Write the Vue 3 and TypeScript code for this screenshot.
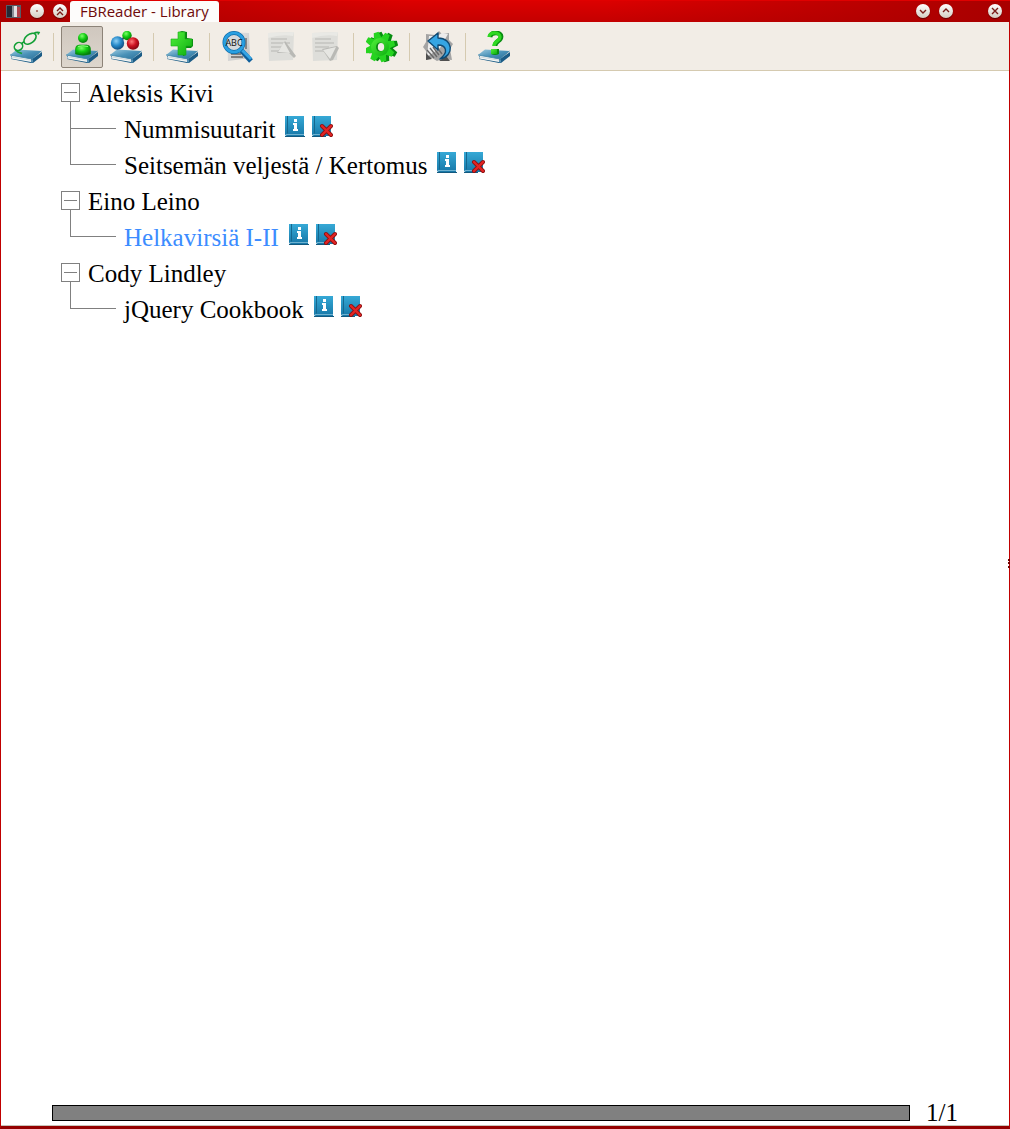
<script setup lang="ts">
import { ref } from 'vue'

interface Book {
  title: string
  current?: boolean
}
interface Author {
  name: string
  open: boolean
  books: Book[]
}
interface Tool {
  id: string
  label: string
  onBook?: boolean
  disabled?: boolean
}

const toolGroups: Tool[][] = [
  [{ id: 'glasses', label: 'Read book', onBook: true }],
  [
    { id: 'person', label: 'Sort by author', onBook: true },
    { id: 'tags', label: 'Sort by tag', onBook: true },
  ],
  [{ id: 'plus', label: 'Add book', onBook: true }],
  [
    { id: 'search', label: 'Search' },
    { id: 'previous', label: 'Find previous', disabled: true },
    { id: 'next', label: 'Find next', disabled: true },
  ],
  [{ id: 'gear', label: 'Preferences' }],
  [{ id: 'rotate', label: 'Rotate text' }],
  [{ id: 'help', label: 'About', onBook: true }],
]

const gearTeeth = [0, 45, 90, 135, 180, 225, 270, 315].map((angle) => angle - 15)

const active = ref('person')

const authors = ref<Author[]>([
  { name: 'Aleksis Kivi', open: true, books: [{ title: 'Nummisuutarit' }, { title: 'Seitsemän veljestä / Kertomus' }] },
  { name: 'Eino Leino', open: true, books: [{ title: 'Helkavirsiä I-II', current: true }] },
  { name: 'Cody Lindley', open: true, books: [{ title: 'jQuery Cookbook' }] },
])
</script>

<template>
  <div class="window">
    <svg class="defs" width="0" height="0" aria-hidden="true">
      <defs>
        <linearGradient id="cover" x1="0" y1="0" x2="1" y2="1">
          <stop offset="0" stop-color="#9ccbe0" />
          <stop offset=".5" stop-color="#4a92b8" />
          <stop offset="1" stop-color="#2a6f99" />
        </linearGradient>
        <radialGradient id="green" cx=".4" cy=".3" r=".7">
          <stop offset="0" stop-color="#7dff6a" />
          <stop offset=".5" stop-color="#12cc12" />
          <stop offset="1" stop-color="#067a0c" />
        </radialGradient>
        <radialGradient id="blue" cx=".4" cy=".35" r=".7">
          <stop offset="0" stop-color="#8fd0f5" />
          <stop offset=".5" stop-color="#2689c9" />
          <stop offset="1" stop-color="#0d4676" />
        </radialGradient>
        <radialGradient id="red" cx=".4" cy=".35" r=".7">
          <stop offset="0" stop-color="#ff7a7a" />
          <stop offset=".5" stop-color="#cc1220" />
          <stop offset="1" stop-color="#780510" />
        </radialGradient>
        <linearGradient id="leaf" x1="0" y1="0" x2="1" y2="1">
          <stop offset="0" stop-color="#52f03a" />
          <stop offset="1" stop-color="#0cae10" />
        </linearGradient>
        <linearGradient id="paper" x1="0" y1="0" x2="1" y2="1">
          <stop offset="0" stop-color="#eeeeee" />
          <stop offset="1" stop-color="#bdbdbd" />
        </linearGradient>
        <linearGradient id="mini" x1="0" y1="0" x2="0" y2="1">
          <stop offset="0" stop-color="#36a9d6" />
          <stop offset="1" stop-color="#1778a8" />
        </linearGradient>
      </defs>
    </svg>

    <header class="titlebar">
      <svg class="app-icon" width="16" height="14" viewBox="0 0 16 14" aria-hidden="true">
        <rect width="15" height="13" fill="#555b66" />
        <path d="M1 1h5v11H1z" fill="#262a36" />
        <path d="M6 1h3v11H6z" fill="#8a8d96" />
        <path d="M8 1h3v11H8z" fill="#e4dfe4" />
        <path d="M11 2h3v10h-3z" fill="#b0404a" />
      </svg>
      <button class="orb" type="button" aria-label="Keep on all desktops">
        <svg viewBox="0 0 14 14"><circle cx="7" cy="7" r="1" fill="#a05a50" /></svg>
      </button>
      <button class="orb" type="button" aria-label="Shade">
        <svg viewBox="0 0 14 14"><path d="M4 7l3-3 3 3M4 11l3-3 3 3" /></svg>
      </button>
      <h1 class="tab">FBReader - Library</h1>
      <span class="spacer"></span>
      <button class="orb" type="button" aria-label="Minimize">
        <svg viewBox="0 0 14 14"><path d="M4 6l3 3 3-3" /></svg>
      </button>
      <button class="orb" type="button" aria-label="Maximize">
        <svg viewBox="0 0 14 14"><path d="M4 8l3-3 3 3" /></svg>
      </button>
      <button class="orb close" type="button" aria-label="Close">
        <svg viewBox="0 0 14 14"><path d="M4 4l6 6M10 4l-6 6" /></svg>
      </button>
    </header>

    <nav class="toolbar">
      <template v-for="(group, g) in toolGroups" :key="g">
        <span v-if="g > 0" class="separator"></span>
        <button
          v-for="tool in group"
          :key="tool.id"
          type="button"
          class="tool"
          :class="{ active: active === tool.id }"
          :disabled="tool.disabled"
          :aria-label="tool.label"
          @click="active = tool.id"
        >
          <svg width="32" height="32" viewBox="0 0 32 32">
            <g v-if="tool.onBook">
              <path d="M1 28l20 4h2l9-7v-4l-10 7L1 25z" fill="#1b5c86" />
              <path d="M2 24.500l-1 3 20 3.500v-3z" fill="#f4f6f4" />
              <path d="M2 26l19 3.200" stroke="#b4c4cc" stroke-width=".6" />
              <path d="M0 24l7-5.500 24.500 1.500L22 28z" fill="url(#cover)" />
              <path d="M0 24l22 4 9.500-8" fill="none" stroke="#3a83a8" stroke-width=".8" />
              <path d="M22 28.500v3" stroke="#8fc3dc" />
            </g>

            <g v-if="tool.id === 'glasses'" fill="none" stroke="#13a036" stroke-width="1.600">
              <ellipse cx="8.500" cy="15.500" rx="4.400" ry="3.800" transform="rotate(-40 8.500 15.500)" />
              <ellipse cx="20" cy="7.800" rx="7" ry="4.300" transform="rotate(-38 20 7.800)" />
              <path d="M12 13q0-2 2.500-2M24 2.500q2-1.500 5-1l-1 2M5 18.500l3 2.500 4 1.500" />
            </g>

            <g v-else-if="tool.id === 'person'">
              <path d="M9.500 23v-5q0-4 4-4h7q4 0 4 4v5q-7 2.500-15 0z" fill="url(#green)" stroke="#078b10" stroke-width=".6" />
              <path d="M12 15.500q4.500-1.500 10 0" stroke="#8cff7c" fill="none" />
              <circle cx="17" cy="7" r="5" fill="url(#green)" />
            </g>

            <g v-else-if="tool.id === 'tags'">
              <path d="M8 12l9-8 7 9" fill="none" stroke="#404858" stroke-width="2" />
              <circle cx="17" cy="4.500" r="4.700" fill="url(#green)" />
              <circle cx="7.500" cy="12" r="6.700" fill="url(#blue)" />
              <circle cx="23" cy="12.500" r="6.200" fill="url(#red)" />
            </g>

            <g v-else-if="tool.id === 'plus'">
              <path d="M13 1l3-1 5 1v6l6 1v7l-2 2h-5v7l-3 1z" fill="#078a10" />
              <path d="M12 1h7v7h7v7h-6v9h-8V15H5V8h7z" fill="url(#leaf)" stroke="#18a818" stroke-width=".6" />
            </g>

            <g v-else-if="tool.id === 'search'">
              <path d="M5 1l22 1 1 25-22 3z" fill="url(#paper)" />
              <path d="M9 23h10M9 26h12M24 7v11" stroke="#666" stroke-width="1.400" />
              <path d="M19 19l10 11" stroke="#0e5f9c" stroke-width="5" />
              <path d="M19 18l10 10" stroke="#35a4e4" stroke-width="3" />
              <circle cx="12" cy="11.500" r="9.500" fill="#d5d9dc" stroke="#0f6ba8" stroke-width="4" />
              <circle cx="12" cy="11.500" r="9.500" fill="none" stroke="#29a0e2" stroke-width="2.600" />
              <text x="12" y="15" text-anchor="middle" class="glass-text">ABC</text>
            </g>

            <g v-else-if="tool.id === 'previous' || tool.id === 'next'">
              <path d="M2 2l26-1-1 28-24 1z" fill="#dededa" />
              <path d="M2 2l26-1-1 4q-12-2-25 2z" fill="#e9e9e5" />
              <path d="M5 8h16M5 12h19M5 16h14M5 20h10" stroke="#c4c4c0" stroke-width="1.600" />
              <path v-if="tool.id === 'previous'" d="M11 22l8-12 11 15-2 2-5-5z" fill="#b9b9b5" />
              <path v-if="tool.id === 'previous'" d="M12 21l6-10 6 11z" fill="#e6e6e2" />
              <path v-if="tool.id === 'next'" d="M12 18l15-3 2 2-6 12-3 1z" fill="#b9b9b5" />
              <path v-if="tool.id === 'next'" d="M13 19l13-3-6 12z" fill="#e6e6e2" />
            </g>

            <g v-else-if="tool.id === 'gear'">
              <g transform="translate(3 0)" fill="#078c10">
                <circle cx="14" cy="16" r="10" />
                <path v-for="angle in gearTeeth" :key="angle" d="M10 8l1.500-7h5l1.500 7z" :transform="`rotate(${angle} 14 16)`" />
              </g>
              <g fill="#26d420">
                <circle cx="14" cy="16" r="10" />
                <path v-for="angle in gearTeeth" :key="angle" d="M10 8l1.500-7h5l1.500 7z" :transform="`rotate(${angle} 14 16)`" />
              </g>
              <circle cx="14" cy="16" r="9" fill="url(#leaf)" />
              <ellipse cx="14" cy="16" rx="4" ry="4.500" fill="#0a8a12" />
              <ellipse cx="15" cy="16" rx="3.200" ry="4" fill="#f2ede6" />
            </g>

            <g v-else-if="tool.id === 'rotate'">
              <path d="M4 3l9 1 4-4 3 3 7-1v7l4 4-3 5 2 11-10-1-5 2-5-3-6 2V20l-3-4 3-5z" fill="#a4a4a4" />
              <path d="M7 5h8l5-3 6 1-8 14L5 26z" fill="#ececec" />
              <path d="M24 25l4 5H17zM4 22l6 6-6 1z" fill="#505050" />
              <path d="M5 19l7 8M8 17l7 9M11 16l6 8M14 15l6 8" stroke="#686868" stroke-width="1.400" />
              <path d="M6 10l10-8v5c15 0 17 18 2 21 9-7 6-14-2-14v5z" fill="#35a5e3" stroke="#104a73" stroke-width="1.400" stroke-linejoin="round" />
            </g>

            <g v-else-if="tool.id === 'help'">
              <path d="M13 18h8v5q-4 2-8 0z" fill="#078c10" />
              <path d="M12 6c1-6 12-5 11 0 0 4-6 4-6 9" fill="none" stroke="#078c10" stroke-width="4.600" />
              <path d="M11 6c1-6 11-5 11 0 0 4-6 4-6 9" fill="none" stroke="#2fd822" stroke-width="3.400" />
              <path d="M13 18h6v5h-6z" fill="url(#leaf)" />
            </g>
          </svg>
        </button>
      </template>
    </nav>

    <main class="library">
      <ul class="authors">
        <li v-for="author in authors" :key="author.name">
          <div class="row">
            <span class="toggle-column" :class="{ open: author.open }">
              <button
                type="button"
                class="toggle"
                :aria-expanded="author.open"
                :aria-label="author.name"
                @click="author.open = !author.open"
              ></button>
            </span>
            <span class="name">{{ author.name }}</span>
          </div>
          <ul v-if="author.open" class="books">
            <li v-for="book in author.books" :key="book.title" class="row">
              <span class="branch"></span>
              <a href="#" class="title" :class="{ current: book.current }" @click.prevent>{{ book.title }}</a>
              <button type="button" class="mark" :aria-label="'About ' + book.title">
                <svg width="22" height="23" viewBox="0 0 22 23">
                  <path d="M1 1h19v20H3q-2 0-2-2z" fill="url(#mini)" />
                  <path d="M3.500 1v17.500" stroke="#15688f" />
                  <path d="M2 19.500h18" stroke="#6fb2d0" />
                  <path d="M1 21.500h20" stroke="#12597f" />
                  <path d="M10 4h3v3h-3zM9 8h4v6h1v2H9v-2h1v-4H9z" fill="#fff" />
                </svg>
              </button>
              <button type="button" class="mark" :aria-label="'Remove ' + book.title">
                <svg width="22" height="23" viewBox="0 0 22 23">
                  <path d="M1 1h19v20H3q-2 0-2-2z" fill="url(#mini)" />
                  <path d="M3.500 1v17.500" stroke="#15688f" />
                  <path d="M2 19.500h12" stroke="#6fb2d0" />
                  <path d="M1 21.500h14" stroke="#12597f" />
                  <path d="M11 11l9 9M20 11l-9 9" stroke="#8c1010" stroke-width="4" stroke-linecap="round" />
                  <path d="M11 11l9 9M20 11l-9 9" stroke="#e32424" stroke-width="2.400" stroke-linecap="round" />
                </svg>
              </button>
            </li>
          </ul>
        </li>
      </ul>
    </main>

    <footer class="position">
      <div class="bar" role="progressbar" aria-valuenow="1" aria-valuemin="1" aria-valuemax="1" aria-label="Page"></div>
      <span class="pages">1/1</span>
    </footer>
    <i class="grip"></i>
  </div>
</template>

<style>
body {
  margin: 0;
  background: #fff;
}
</style>

<style scoped>
.window {
  position: relative;
  display: flex;
  flex-direction: column;
  box-sizing: border-box;
  min-height: 100vh;
  border: solid #c00000;
  border-width: 0 1px 3px;
  border-bottom-color: #940000;
  background: #fff;
  color: #000;
  font-family: Georgia, "Liberation Serif", serif;
}
.defs {
  position: absolute;
}
button {
  padding: 0;
  border: 0;
  background: none;
}
svg {
  display: block;
}
ul {
  margin: 0;
  padding: 0;
  list-style: none;
}

.titlebar {
  display: flex;
  align-items: center;
  height: 22px;
  margin: 0 -1px;
  padding: 0 8px 0 6px;
  box-sizing: border-box;
  border-top: 1px solid #e00000;
  background:
    linear-gradient(90deg, #a80000 0, transparent 40%, transparent 60%, #a80000 100%),
    linear-gradient(#dc0000, #c40000);
}
.app-icon {
  margin-right: 8px;
}
.orb {
  width: 14px;
  height: 14px;
  margin: 0 9px 2px 0;
  border-radius: 50%;
  background: linear-gradient(#fff, #d4cdc2);
  box-shadow: 0 1px 1px #5c0000;
}
.orb path {
  fill: none;
  stroke: #7a1c18;
  stroke-width: 1.4;
}
.orb.close {
  margin: 0 0 2px 26px;
}
.tab {
  align-self: stretch;
  margin: 0 0 0 -6px;
  padding: 0 10px;
  border-radius: 3px 3px 0 0;
  background: #fdfcfb;
  color: #6e0a0a;
  font: 15px/21px "Open Sans", sans-serif;
  white-space: nowrap;
}
.spacer {
  flex: 1;
}

.toolbar {
  display: flex;
  gap: 2px;
  padding: 4px 4px 2px;
  border-bottom: 1px solid #d5cab0;
  background: #f2ede6;
}
.tool {
  display: grid;
  place-items: center;
  box-sizing: border-box;
  width: 42px;
  height: 42px;
  border: 1px solid transparent;
  border-radius: 2px;
}
.tool.active {
  border-color: #8c8378;
  background: linear-gradient(#cfc7be, #ddd6cd);
}
.separator {
  box-sizing: border-box;
  width: 10px;
  margin: 7px 0;
  padding-left: 4px;
}
.separator::before {
  content: "";
  display: block;
  width: 1px;
  height: 28px;
  background: #d5cab0;
}
.glass-text {
  font: 9px "Open Sans", sans-serif;
  fill: #111;
}

.library {
  flex: 1;
  padding: 4px 60px;
}
.row {
  display: flex;
  height: 36px;
  font-size: 25px;
  line-height: 38px;
  white-space: nowrap;
}
.toggle-column {
  display: flex;
  flex-direction: column;
  align-items: center;
  width: 19px;
  margin-right: 8px;
  padding-top: 8px;
}
.toggle-column.open::after {
  content: "";
  flex: 1;
  width: 1px;
  background: #808080;
}
.toggle {
  display: grid;
  place-items: center;
  box-sizing: border-box;
  width: 19px;
  height: 19px;
  border: 1px solid #808080;
}
.toggle::before {
  content: "";
  width: 13px;
  height: 1px;
  background: #808080;
}
.branch {
  width: 46px;
  margin: 0 8px 0 9px;
}
.branch::before,
.row:not(:last-child) > .branch::after {
  content: "";
  display: block;
  box-sizing: border-box;
  height: 18px;
  border-left: 1px solid #808080;
}
.branch::before {
  border-bottom: 1px solid #808080;
}
.title {
  margin-right: 9px;
  color: inherit;
  text-decoration: none;
}
.title.current {
  color: #3c8cff;
}
.mark {
  height: 23px;
  margin: 4px 5px 0 0;
}

.position {
  display: flex;
  align-items: center;
  gap: 16px;
  padding: 0 51px;
  border-bottom: 1px solid #c8c4b8;
}
.bar {
  flex: 1;
  box-sizing: border-box;
  height: 16px;
  border: 1px solid #000;
  background: #808080;
}
.pages {
  font-size: 25px;
  line-height: 24px;
}
.grip {
  position: absolute;
  top: 50%;
  right: -1px;
  width: 0;
  height: 9px;
  margin-top: -4px;
  border-right: 2px dotted #700000;
}
</style>
